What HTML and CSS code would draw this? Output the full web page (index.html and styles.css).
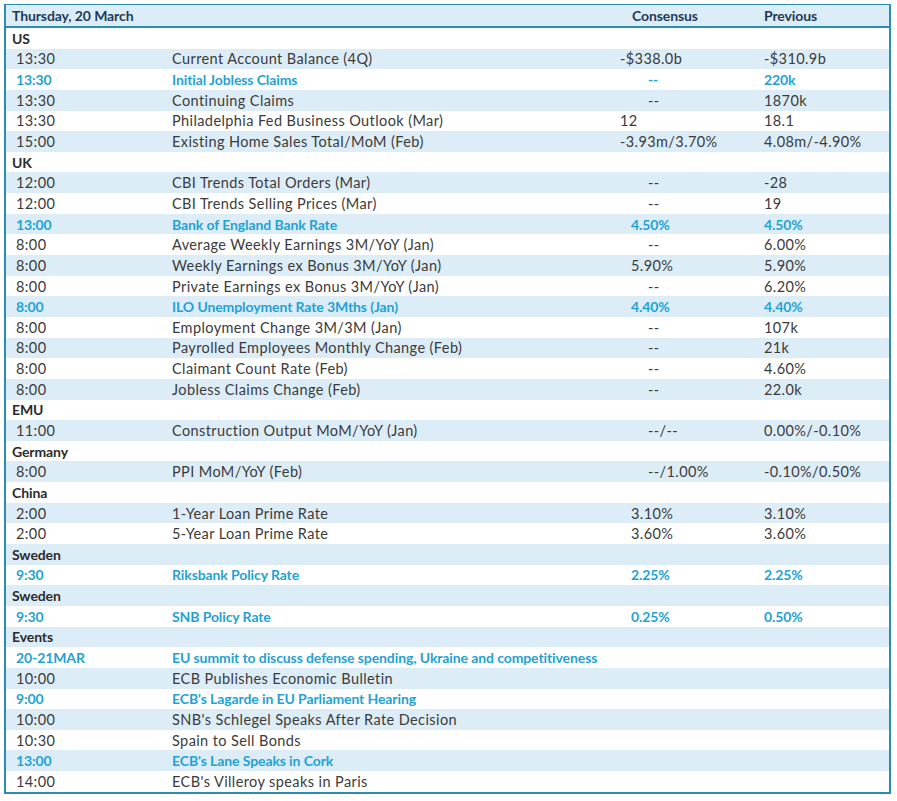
FILE: index.html
```html
<!DOCTYPE html>
<html>
<head>
<meta charset="utf-8">
<link rel="stylesheet" href="styles.css">
</head>
<body>
<div class="sheet">
  <div class="head">
    <div class="c1 hd">Thursday, 20 March</div><div class="c2"></div><div class="c3 hd">Consensus</div><div class="c4 hd">Previous</div>
  </div>
  <div class="body">
    <div class="row grp"><div class="c1">US</div></div>
    <div class="row"><div class="c1">13:30</div><div class="c2">Current Account Balance (4Q)</div><div class="c3">-$338.0b</div><div class="c4">-$310.9b</div></div>
    <div class="row hi"><div class="c1">13:30</div><div class="c2">Initial Jobless Claims</div><div class="c3 p2">--</div><div class="c4">220k</div></div>
    <div class="row"><div class="c1">13:30</div><div class="c2">Continuing Claims</div><div class="c3 p2">--</div><div class="c4">1870k</div></div>
    <div class="row"><div class="c1">13:30</div><div class="c2">Philadelphia Fed Business Outlook (Mar)</div><div class="c3">12</div><div class="c4">18.1</div></div>
    <div class="row"><div class="c1">15:00</div><div class="c2">Existing Home Sales Total/MoM (Feb)</div><div class="c3">-3.93m/3.70%</div><div class="c4">4.08m/-4.90%</div></div>
    <div class="row grp"><div class="c1">UK</div></div>
    <div class="row"><div class="c1">12:00</div><div class="c2">CBI Trends Total Orders (Mar)</div><div class="c3 p2">--</div><div class="c4">-28</div></div>
    <div class="row"><div class="c1">12:00</div><div class="c2">CBI Trends Selling Prices (Mar)</div><div class="c3 p2">--</div><div class="c4">19</div></div>
    <div class="row hi"><div class="c1">13:00</div><div class="c2">Bank of England Bank Rate</div><div class="c3 p1">4.50%</div><div class="c4">4.50%</div></div>
    <div class="row"><div class="c1">8:00</div><div class="c2">Average Weekly Earnings 3M/YoY (Jan)</div><div class="c3 p2">--</div><div class="c4">6.00%</div></div>
    <div class="row"><div class="c1">8:00</div><div class="c2">Weekly Earnings ex Bonus 3M/YoY (Jan)</div><div class="c3 p1">5.90%</div><div class="c4">5.90%</div></div>
    <div class="row"><div class="c1">8:00</div><div class="c2">Private Earnings ex Bonus 3M/YoY (Jan)</div><div class="c3 p2">--</div><div class="c4">6.20%</div></div>
    <div class="row hi"><div class="c1">8:00</div><div class="c2">ILO Unemployment Rate 3Mths (Jan)</div><div class="c3 p1">4.40%</div><div class="c4">4.40%</div></div>
    <div class="row"><div class="c1">8:00</div><div class="c2">Employment Change 3M/3M (Jan)</div><div class="c3 p2">--</div><div class="c4">107k</div></div>
    <div class="row"><div class="c1">8:00</div><div class="c2">Payrolled Employees Monthly Change (Feb)</div><div class="c3 p2">--</div><div class="c4">21k</div></div>
    <div class="row"><div class="c1">8:00</div><div class="c2">Claimant Count Rate (Feb)</div><div class="c3 p2">--</div><div class="c4">4.60%</div></div>
    <div class="row"><div class="c1">8:00</div><div class="c2">Jobless Claims Change (Feb)</div><div class="c3 p2">--</div><div class="c4">22.0k</div></div>
    <div class="row grp"><div class="c1">EMU</div></div>
    <div class="row"><div class="c1">11:00</div><div class="c2">Construction Output MoM/YoY (Jan)</div><div class="c3 p2">--/--</div><div class="c4">0.00%/-0.10%</div></div>
    <div class="row grp"><div class="c1">Germany</div></div>
    <div class="row"><div class="c1">8:00</div><div class="c2">PPI MoM/YoY (Feb)</div><div class="c3 p2">--/1.00%</div><div class="c4">-0.10%/0.50%</div></div>
    <div class="row grp"><div class="c1">China</div></div>
    <div class="row"><div class="c1">2:00</div><div class="c2">1-Year Loan Prime Rate</div><div class="c3 p1">3.10%</div><div class="c4">3.10%</div></div>
    <div class="row"><div class="c1">2:00</div><div class="c2">5-Year Loan Prime Rate</div><div class="c3 p1">3.60%</div><div class="c4">3.60%</div></div>
    <div class="row grp"><div class="c1">Sweden</div></div>
    <div class="row hi"><div class="c1">9:30</div><div class="c2">Riksbank Policy Rate</div><div class="c3 p1">2.25%</div><div class="c4">2.25%</div></div>
    <div class="row grp"><div class="c1">Sweden</div></div>
    <div class="row hi"><div class="c1">9:30</div><div class="c2">SNB Policy Rate</div><div class="c3 p1">0.25%</div><div class="c4">0.50%</div></div>
    <div class="row grp"><div class="c1">Events</div></div>
    <div class="row hi"><div class="c1">20-21MAR</div><div class="c2 wide">EU summit to discuss defense spending, Ukraine and competitiveness</div></div>
    <div class="row"><div class="c1">10:00</div><div class="c2">ECB Publishes Economic Bulletin</div></div>
    <div class="row hi"><div class="c1">9:00</div><div class="c2">ECB's Lagarde in EU Parliament Hearing</div></div>
    <div class="row"><div class="c1">10:00</div><div class="c2">SNB's Schlegel Speaks After Rate Decision</div></div>
    <div class="row"><div class="c1">10:30</div><div class="c2">Spain to Sell Bonds</div></div>
    <div class="row hi"><div class="c1">13:00</div><div class="c2">ECB's Lane Speaks in Cork</div></div>
    <div class="row"><div class="c1">14:00</div><div class="c2">ECB's Villeroy speaks in Paris</div></div>
  </div>
</div>
</body>
</html>
```

FILE: styles.css
```css
html, body {
  margin: 0;
  padding: 0;
  background: #ffffff;
}
body {
  padding: 4px 0 0 4px;
  font-family: Lato, "Open Sans", sans-serif;
  font-size: 14.5px;
  letter-spacing: 0.4px;
  color: #3b3b3b;
}
.sheet {
  width: 883px;
  border-left: 2px solid #2a8db2;
  border-right: 2px solid #2a8db2;
  border-bottom: 2px solid #2a8db2;
  border-top: 1px solid #2a8db2;
}
.head, .row {
  display: grid;
  grid-template-columns: 166px 448px 144px 1fr;
  align-items: center;
  white-space: nowrap;
}
.head {
  height: 21px;
  background: #dcedf8;
  border-bottom: 2px solid #2a8db2;
}
.hd {
  font-size: 14px;
  letter-spacing: -0.1px;
  font-weight: 700;
  color: #1e3a58;
}
.head .c1 { padding-left: 6px; }
.head .c3 { padding-left: 12px; }
.row {
  height: 20.65px;
  line-height: 19px;
}
.body .row:nth-child(even) {
  background: #dcedf8;
}
.row .c1 { padding-left: 10px; }
.row.grp .c1 {
  padding-left: 6px;
  font-size: 14px;
  letter-spacing: -0.1px;
  font-weight: 700;
  color: #2b2b2b;
}
.row.hi {
  color: #1fa2d6;
  font-size: 14px;
  letter-spacing: -0.1px;
  font-weight: 700;
}
.c3.p1 { padding-left: 11px; }
.c3.p2 { padding-left: 28px; }
.c2.wide {
  grid-column: 2 / 5;
}
```
